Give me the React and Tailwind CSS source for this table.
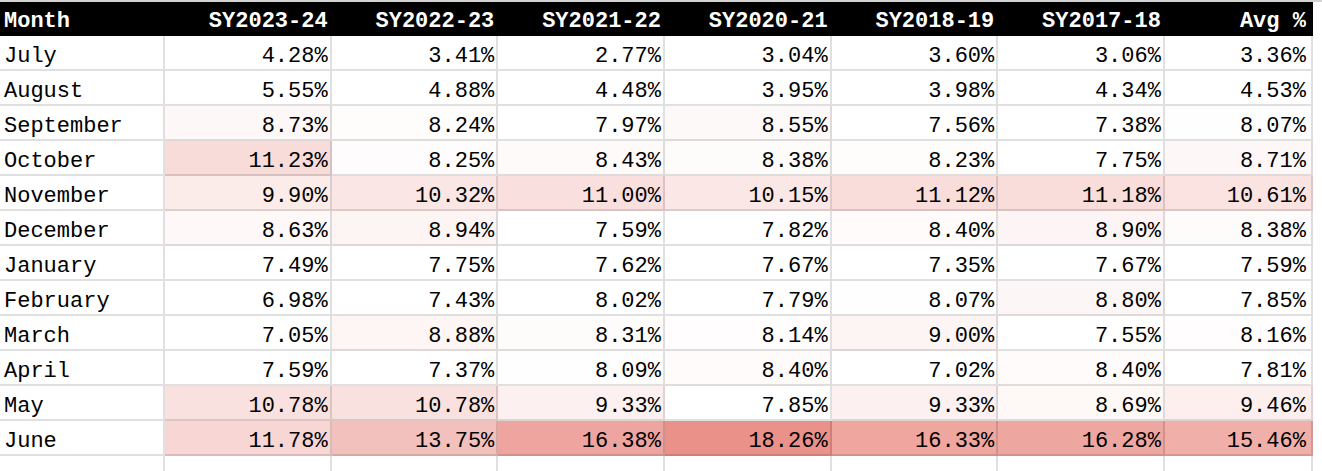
import React from "react";

const headers = ["SY2023-24", "SY2022-23", "SY2021-22", "SY2020-21", "SY2018-19", "SY2017-18", "Avg %"];

const rows = [
    ["July", 4.28, 3.41, 2.77, 3.04, 3.6, 3.06, 3.36],
    ["August", 5.55, 4.88, 4.48, 3.95, 3.98, 4.34, 4.53],
    ["September", 8.73, 8.24, 7.97, 8.55, 7.56, 7.38, 8.07],
    ["October", 11.23, 8.25, 8.43, 8.38, 8.23, 7.75, 8.71],
    ["November", 9.9, 10.32, 11.0, 10.15, 11.12, 11.18, 10.61],
    ["December", 8.63, 8.94, 7.59, 7.82, 8.4, 8.9, 8.38],
    ["January", 7.49, 7.75, 7.62, 7.67, 7.35, 7.67, 7.59],
    ["February", 6.98, 7.43, 8.02, 7.79, 8.07, 8.8, 7.85],
    ["March", 7.05, 8.88, 8.31, 8.14, 9.0, 7.55, 8.16],
    ["April", 7.59, 7.37, 8.09, 8.4, 7.02, 8.4, 7.81],
    ["May", 10.78, 10.78, 9.33, 7.85, 9.33, 8.69, 9.46],
    ["June", 11.78, 13.75, 16.38, 18.26, 16.33, 16.28, 15.46],
];

// white -> #e67c73 colour scale, white below the middle
function heat(v) {
    let t = (v - 8.0) / 12.2;
    if (t < 0) t = 0;
    if (t > 1) t = 1;
    const r = Math.round(255 - t * (255 - 230));
    const g = Math.round(255 - t * (255 - 124));
    const b = Math.round(255 - t * (255 - 115));
    return `rgb(${r}, ${g}, ${b})`;
}

export default function App() {
    return (
        <div className="w-[1322px] h-[471px] overflow-hidden bg-white font-['Liberation_Mono','DejaVu_Sans_Mono',monospace] text-[22px] leading-[25px] text-black">
            <div className="h-[2px] bg-[#d3d3d3]" />
            <div className="grid grid-cols-[165px_repeat(6,166.67px)_148px]">
                <div className="h-[34px] bg-black text-white font-bold flex items-end pb-[2px] pl-1">Month</div>
                {headers.map((h, i) => (
                    <div
                        key={h}
                        className={
                            "h-[34px] bg-black text-white font-bold flex items-end pb-[2px] justify-end " +
                            (i === headers.length - 1 ? "pr-[7px]" : "pr-1")
                        }
                    >
                        {h}
                    </div>
                ))}

                {rows.map((row) => (
                    <React.Fragment key={row[0]}>
                        <div className="h-[35px] flex items-end pl-1 border-r-2 border-b-2 border-black/12">
                            {row[0]}
                        </div>
                        {row.slice(1).map((v, i) => (
                            <div
                                key={i}
                                className={
                                    "h-[35px] flex items-end justify-end border-r-2 border-b-2 border-black/12 " +
                                    (i === 6 ? "pr-[5px]" : "pr-[2px]")
                                }
                                style={{ backgroundColor: heat(v) }}
                            >
                                {v.toFixed(2)}%
                            </div>
                        ))}
                    </React.Fragment>
                ))}

                {Array.from({ length: 8 }).map((_, i) => (
                    <div key={i} className="h-[35px] border-r-2 border-b-2 border-black/12" />
                ))}
            </div>
        </div>
    );
}
